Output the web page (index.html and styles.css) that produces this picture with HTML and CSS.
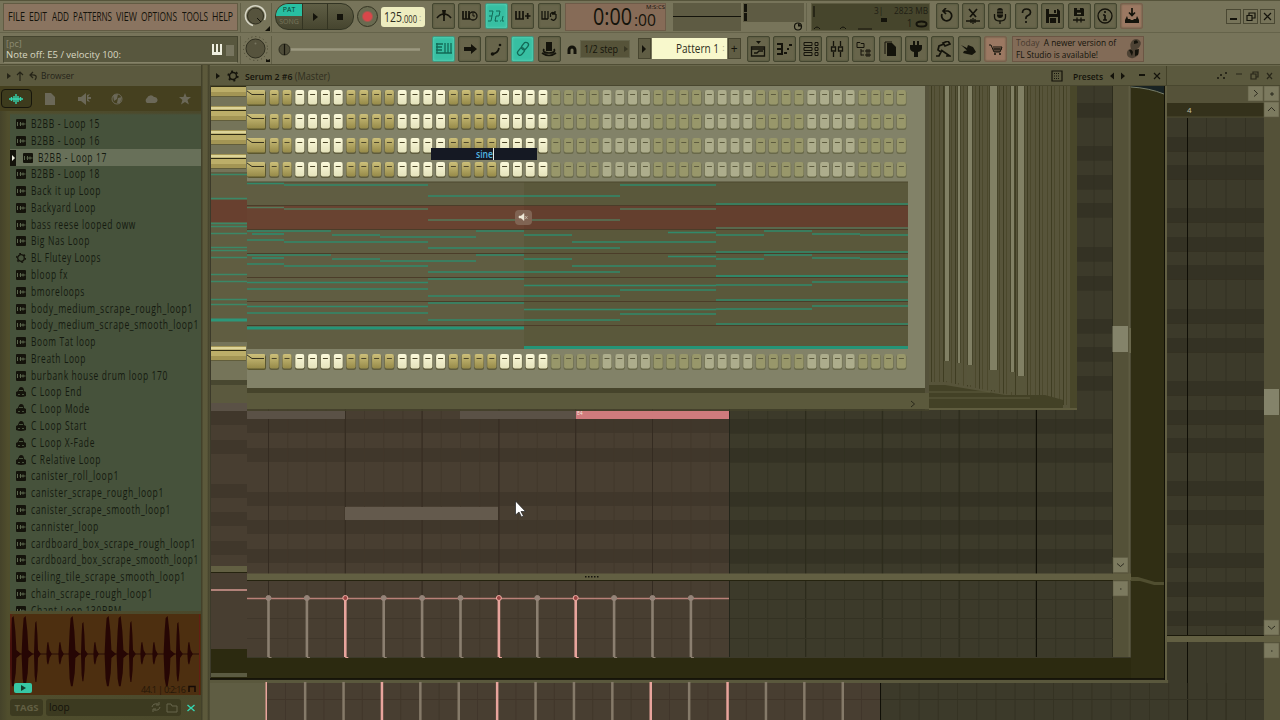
FILE: index.html
```html
<!DOCTYPE html>
<html lang="en">
<head>
<meta charset="utf-8">
<title>FL Studio</title>
<link rel="stylesheet" href="styles.css">
</head>
<body>
<header class="toolbar">
  <div class="bar bar-top">
    <nav class="menu">
      <span data-w="17">FILE</span><span data-w="18">EDIT</span><span data-w="17">ADD</span><span data-w="39">PATTERNS</span><span data-w="21">VIEW</span><span data-w="36">OPTIONS</span><span data-w="26">TOOLS</span><span data-w="21">HELP</span>
    </nav>
    <div class="knob-cell"><svg width="30" height="30"><circle cx="13.500" cy="13" r="8" class="knob"/><path d="M11 22.500A10 10 0 1 1 22.500 17" class="knob-ring"/><path d="M15 15l4 4" class="thin"/><path d="M28 23v5h-5z"/></svg></div>
    <div class="transport">
      <div class="patsong"><b>PAT</b><i>SONG</i></div>
      <div class="tbtn"><svg width="10" height="10"><path d="M3 1l5 4-5 4z"/></svg></div>
      <div class="tbtn tstop"><svg width="10" height="10"><path d="M1 2h6v6H1z"/></svg></div>
    </div>
    <div class="record"></div>
    <div class="tempo"><b data-w="18">125</b><small data-w="15">.000</small><i>:</i></div>
    <div class="buttons g1" data-icons="metro wait count* overdub looprec"></div>
    <div class="clock"><span data-w="39">0:00</span><div><i data-w="19">M:S:CS</i><small data-w="22">:00</small></div></div>
    <div class="scopes"><svg width="132" height="28"><rect width="68" height="28" class="sc"/><path d="M0 13.500h68" class="thin"/><rect x="70" width="61" height="19" class="sc"/><path d="M71 1h3v8h-3zM71 10h3v8h-3z"/><circle cx="125" cy="23.500" r="3.500" class="ln"/><path d="M125 20v3.500h4"/></svg></div>
    <div class="cpu"><svg width="76" height="27"><path d="M2 2v11" class="ln"/><path d="M2 25q3-4 6 0m20 0q3-4 6 0M46 25h14" class="thin"/><path d="M69 14h6v4h-6z"/></svg><div class="cpu-n"><span data-w="54">3|&nbsp;&nbsp;&nbsp;&nbsp;&nbsp;2823 MB</span><span class="one">1 <svg width="13" height="8"><ellipse cx="6.500" cy="4" rx="5" ry="2.500" class="thick"/></svg></span></div></div>
    <div class="buttons g2" data-icons="undo cut mic help save savenew info dl!"></div>
    <div class="winctl"><span><svg width="13" height="13"><path d="M3 9h7" class="thick"/></svg></span><span><svg width="13" height="13"><path d="M3 5.500h5v5H3zM5 5V3h6v5H8" class="ln"/></svg></span><span><svg width="13" height="13"><path d="M3 3l7 7M10 3l-7 7" class="ln"/></svg></span></div>
  </div>
  <div class="bar bar-low">
    <div class="hint"><div><i>[pc]</i><span data-w="115">Note off: E5 / velocity 100:</span></div><svg width="24" height="14"><path d="M1 1h2v8h2V1h2v8h2V1h2v11H1z" class="wh"/><rect x="15" y="2" width="8" height="11" class="ghost"/></svg></div>
    <div class="knob-cell"><svg width="30" height="28"><circle cx="13.500" cy="12.500" r="12" class="ticks"/><circle cx="13.500" cy="12.500" r="9.500" class="knob"/><circle cx="13.500" cy="7.500" r="1" class="ghost"/><path d="M24 23v3h4v-3l-2 1z"/></svg></div>
    <div class="slider"><svg width="146" height="20"><path d="M11 10.500h134" class="track"/><circle cx="9.500" cy="10.500" r="5.500" class="handle"/><path d="M9.500 5v11" class="ln"/></svg></div>
    <div class="buttons g3" data-icons="typing* arrow slide link* hat"></div>
    <svg class="magnet" width="12" height="14"><path d="M3 11V7a3 3 0 0 1 6 0v4" class="mag"/></svg>
    <div class="snap"><span data-w="34">1/2 step</span><svg width="6" height="10"><path d="M1 2l4 3-4 3z" class="dim"/></svg></div>
    <div class="pat"><span class="pb"><svg width="8" height="8"><path d="M2 0l4 4-4 4z"/></svg></span><span class="pn"><b data-w="43">Pattern 1</b><i>:</i></span><span class="pb">+</span></div>
    <div class="buttons g4" data-icons="playlist roll rack mixer browse doc plug tempo touch cart!"></div>
    <div class="news"><div><span data-w="100"><i>Today</i>&nbsp; A newer version of</span><span data-w="82">FL Studio is available!</span></div><svg width="18" height="22"><path d="M8 2q3-2 6 0 3 2 1 6-1 2-3 3 3 2 1 6-3 4-7 3-5-1-4-6 1-3 4-3-2-6 2-9z" fill="#4d4234"/><path d="M9 3q4-2 4 2l-4 1zM4 12q3-1 4 2l-1 4zM10 12l4-1-1 6-3 1z"/></svg></div>
  </div>
</header>
<main class="main">
  <aside class="browser">
    <div class="bhead"><svg width="34" height="12"><path d="M2 3l4 3-4 3z"/><path d="M15 11V2m-3 3l3-3 3 3" class="ln"/><path d="M30 10q4-6-5-5m3-3l-3 3 3 3" class="ln"/></svg><span data-w="33">Browser</span></div>
    <div class="tabs">
      <span class="on"><svg width="16" height="12"><path d="M1 6h14M3.500 4v4M6 3v6M8 1v10M10 3v6M12.500 4v4" class="aq"/></svg></span>
      <span><svg width="14" height="14"><path d="M2 1h6l4 4v8H2z"/></svg></span>
      <span><svg width="14" height="14"><path d="M1 5h3l5-4v12L4 9H1zM10 3l3-1-2 3h3v2h-3l2 3-3-1z"/></svg></span>
      <span><svg width="14" height="14"><circle cx="7" cy="7" r="5" fill="none" stroke="#6b6858"/><path d="M3 3l5-1-1 5-3 2zM8 6l4-1-2 6H7z"/></svg></span>
      <span><svg width="14" height="14"><path d="M3 11a3 3 0 0 1 0-5 4 4 0 0 1 7-1 3 3 0 0 1 1 6z"/></svg></span>
      <span><svg width="14" height="14"><path d="M7 1l1.600 4H13L9.500 8l1.400 4.600L7 10l-4 2.600L4.400 8 1 5h4.400z"/></svg></span>
    </div>
    <ul class="list" id="list"></ul>
    <div class="preview"><svg id="wave" width="190" height="81"></svg></div>
    <div class="search"><b>TAGS</b><div><span>loop</span><svg width="28" height="12"><path d="M2 6q1-4 6-3M9 1v3H6M10 6q-1 4-6 3M3 11V8h3M17 3h4l1 2h5v6H17z" class="gl"/></svg></div><svg width="10" height="10"><path d="M1.500 3l7 6M8.500 3l-7 6" class="aq"/></svg></div>
  </aside>
  <div class="split"></div>
  <section class="work">
    <div class="titles">
      <div class="ptitle"><svg width="30" height="14"><path d="M6 4l4 3-4 3z"/><circle cx="23" cy="7" r="3.500" class="ln2"/><circle cx="23" cy="7" r="4.800" class="teeth"/></svg><span data-w="85"><b>Serum 2 #6</b> <i>(Master)</i></span>
        <svg class="grid-i" width="12" height="12"><path d="M1 1h10v10H1z" class="ln"/><path d="M3 3.500h6M3 6h6M3 8.500h6" class="dots"/></svg><span data-w="30"><b>Presets</b></span><svg width="60" height="14"><path d="M6 3.500L2 7l4 3.500zM13 3.500L17 7l-4 3.500z"/><path d="M31 6h6" class="thick"/><path d="M46 4l6 6M52 4l-6 6" class="ln"/></svg></div>
      <div class="rtitle"><svg width="66" height="14"><path d="M5 9h2M8 6h2M11 9h2M13 4h2" class="thick"/><path d="M24 5h6M39 5h5v5h-5zM41 5V3h5v5h-2M55 4l5 6M60 4l-5 6" class="ln"/></svg></div>
    </div>
    <svg id="stage" width="1070" height="634" viewBox="210 86 1070 634"></svg>
  </section>
</main>
<script src="app.js"></script>
</body>
</html>
```
FILE: styles.css
```css
* { box-sizing: border-box; }
body { margin: 0; width: 1280px; height: 720px; overflow: hidden; background: #5b593e; color: #14130b; font-family: "Open Sans", "Noto Sans", sans-serif; }
svg { display: block; flex: none; fill: #14130b; }
i { font-style: normal; }
.fit { display: inline-block; flex: none; white-space: pre; }
.fit > span { display: inline-block; transform-origin: 0 50%; white-space: pre; }
.thin { fill: none; stroke: #14130b; stroke-width: 1; }
.ln { fill: none; stroke: #14130b; stroke-width: 1.2; }
.ln2 { fill: none; stroke: #14130b; stroke-width: 1.5; }
.thick { fill: none; stroke: #14130b; stroke-width: 2; }
.teeth { fill: none; stroke: #14130b; stroke-width: 1.6; stroke-dasharray: 2 3.02; }
.dots { fill: none; stroke: #14130b; stroke-dasharray: 1 1; }
.ic { fill: none; stroke: #14130b; stroke-width: 1.7; }
.ic1 { fill: none; stroke: #14130b; stroke-width: 1.3; }
.fl { fill: #14130b; stroke: none; }
.wh { fill: #efefe0; }
.ghost { fill: #77755f; }
.dim { fill: #393724; }
.aq { fill: none; stroke: #35d6b0; stroke-width: 1.4; }
.gl { fill: none; stroke: #66644b; }

.toolbar { height: 65px; background: #77745a; border-bottom: 1px solid #504e35; }
.bar { display: flex; align-items: flex-start; height: 33px; padding: 3px 5px 0 3px; border-bottom: 1px solid #65634a; }
.bar-top { border-top: 1px solid #56543b; padding-top: 2px; }
.bar-low { height: 31px; padding-top: 3px; border: 0; }
.menu { display: flex; align-items: center; gap: 4.300px; width: 235px; height: 28px; padding: 0 0 2px 4px; background: #8a7460; border: 1px solid #625b43; font-size: 13.500px; }
.knob-cell { width: 32px; height: 29px; margin-left: 2px; padding-left: 1px; border-left: 1px solid #605e45; border-right: 1px solid #605e45; }
.bar-low .knob-cell { height: 28px; }
.knob { fill: #56533d; stroke: #302f20; }
.knob-ring { fill: none; stroke: #d5d4c4; stroke-width: 1.5; }
.ticks { fill: none; stroke: #45432e; stroke-dasharray: 1 3; }
.transport { display: flex; width: 79px; height: 27px; margin-left: 3px; border: 1px solid #323423; border-radius: 13px; overflow: hidden; background: linear-gradient(#5f5e45, #46452f); }
.patsong { display: flex; flex-direction: column; width: 27px; font-size: 7px; line-height: 11px; text-align: center; border-right: 1px solid #343422; color: #77745a; }
.patsong b { height: 12px; background: #28bfa1; color: #083d31; font-weight: 400; }
.tbtn { display: flex; align-items: center; justify-content: center; width: 25px; border-right: 1px solid #343422; }
.tstop { border: 0; }
.record { width: 21px; height: 21px; margin: 3px 0 0 3px; border-radius: 50%; border: 1px solid #343422; background: radial-gradient(#d9474a 0 4px, #696a50 6px); }
.tempo { display: flex; align-items: center; width: 44px; height: 20px; margin: 4px 0 0 3px; padding-left: 3px; background: #eeedc0; border-radius: 3px; color: #2e2d1f; }
.tempo b { font-weight: 400; font-size: 15px; line-height: 18px; padding-bottom: 2px; }
.tempo small { font-size: 11px; line-height: 14px; padding-top: 3px; }
.tempo i { margin-left: 2px; font-size: 9px; color: #aaa985; }
.buttons { display: flex; gap: 3.400px; flex: none; }
.btn { display: flex; align-items: center; justify-content: center; width: 23px; height: 26px; background: #68654b; border: 1px solid #444630; box-shadow: inset 0 0 2px #4b5236; border-radius: 2px; }
.btn.lit { background: #37bfa2; border-color: #43947b; box-shadow: inset 0 0 3px #68d9bd; }
.btn.lit svg * { stroke: #126956; }
.btn.lit svg .fl { fill: #126956; stroke: none; }
.btn.warm { background: #9b7862; border-color: #77604c; }
.g1 { margin-left: 7px; }
.clock { display: flex; width: 101px; height: 28px; margin-left: 4px; padding-left: 27px; background: #866b57; border: 1px solid #6e5b48; font-size: 23px; line-height: 25px; }
.clock div { display: flex; flex-direction: column; margin-left: 2px; }
.clock small { font-size: 17px; line-height: 19px; }
.clock i { font-size: 6px; line-height: 6px; margin-left: 12px; }
.scopes { width: 134px; margin-left: 7px; border-right: 1px solid #65634a; }
.sc { fill: #5e5b43; }
.cpu { display: flex; width: 119px; height: 28px; margin-left: 4px; background: #46452c; border: 1px solid #5c5a40; }
.cpu-n { display: flex; flex-direction: column; align-items: flex-end; width: 54px; margin-left: -14px; font-size: 9px; line-height: 13px; color: #1f1e14; }
.one { display: flex; align-items: center; gap: 2px; font-size: 10px; }
.g2 { margin-left: 6px; }
.winctl { display: flex; gap: 2px; margin: 6px 0 0 auto; }
.winctl span { width: 15px; height: 15px; border: 1px solid #4a4833; }
.hint { display: flex; justify-content: space-between; align-items: center; width: 235px; height: 27px; padding: 0 2px; background: #58573e; border: 1px solid #45452f; border-bottom-color: #858268; }
.hint div { display: flex; flex-direction: column; font-size: 9.500px; line-height: 12px; color: #d9d8c2; }
.hint div > i { color: #8d8b72; font-size: 9px; line-height: 11px; }
.slider { width: 154px; padding: 3px 0 0 3px; }
.track { stroke: #9b9880; stroke-width: 2.5; }
.handle { fill: #4e4c38; stroke: #2f2e20; }
.g3 { margin-left: 6px; }
.magnet { margin: 7px 0 0 5px; }
.mag { fill: none; stroke: #14130b; stroke-width: 3; }
.snap { display: flex; align-items: center; gap: 5px; width: 50px; height: 18px; margin: 4px 0 0 2px; padding-left: 3px; background: #565339; border: 1px solid #64634a; font-size: 10.500px; line-height: 15px; }
.pat { display: flex; gap: 1px; margin: 2px 0 0 8px; }
.pb { display: flex; align-items: center; justify-content: center; width: 13px; height: 21px; background: #605d44; border: 1px solid #484630; font-size: 12px; }
.pn { display: flex; align-items: center; justify-content: flex-end; gap: 3px; width: 75px; height: 21px; padding: 0 2px 2px 0; background: #f8f8cc; font-size: 13.500px; color: #302f20; }
.pn b { font-weight: 400; }
.pn i { font-size: 9px; color: #aaa985; }
.g4 { margin-left: 6px; }
.news { display: flex; justify-content: space-between; align-items: center; width: 132px; height: 26px; margin-left: 5px; padding-left: 3px; background: #826b57; border: 1px solid #6b5644; }
.news div { display: flex; flex-direction: column; font-size: 9.500px; line-height: 12px; }
.news i { color: #473a2e; }

.main { display: flex; height: 655px; }
.browser { width: 201px; height: 655px; background: linear-gradient(90deg, #45432a, #504e2d 8px, #4a482b); }
.bhead { display: flex; align-items: center; gap: 2px; height: 21px; padding: 0 0 1px 5px; background: #5b593e; border-top: 1px solid #69674c; font-size: 9.500px; color: #24231a; }
.bhead svg { opacity: .75; }
.tabs { display: flex; align-items: center; height: 25px; padding-left: 1px; gap: 3px; background: #45401f; }
.tabs span { display: flex; align-items: center; justify-content: center; width: 30.700px; height: 19px; }
.tabs svg { fill: #6b6858; }
.tabs .on { border: 1px solid #17160c; border-radius: 4px; background: #3d3b1d; }
.list { height: 500px; margin: 0 0 0 10px; padding: 4.600px 0 0; list-style: none; overflow: hidden; background: linear-gradient(#46402a00 0 2px, #46523b 4px); }
.list li { display: flex; align-items: center; gap: 5px; height: 16.790px; padding-left: 6px; font-size: 12px; line-height: 16px; letter-spacing: .9px; color: #151a10; }
.list li.sel { padding-left: 0; gap: 5px; background: #687059; }
.list li.sel svg:first-child { margin-right: 1px; }
.preview { width: 191px; height: 81px; margin: 3px 0 0 10px; background: #4d2f10; }
.search { display: flex; align-items: center; gap: 3px; height: 24px; padding-left: 10px; font-size: 9.500px; }
.search b { width: 33px; height: 17px; text-align: center; line-height: 17px; background: #3c3a20; color: #625f43; border-radius: 3px; }
.search div { display: flex; align-items: center; justify-content: space-between; width: 135px; height: 17px; padding: 0 3px; background: #3c3a20; border-radius: 3px; font-size: 10px; }
.search > svg { margin-left: 2px; }
.split { width: 9px; background: linear-gradient(90deg, #43412a 1px, #5c593b 2px 6px, #413f29 8px, #5a583d); }
.work { width: 1070px; }
.titles { display: flex; height: 21px; border-top: 1px solid #69674c; border-bottom: 1px solid #49472f; }
.ptitle, .rtitle { display: flex; align-items: center; font-size: 10px; }
.ptitle { width: 957px; gap: 5px; border-right: 1px solid #444229; }
.ptitle b { font-weight: 600; font-size: 9.500px; }
.ptitle i { color: #302f20; }
.grid-i { margin-left: 716px; margin-right: 5px; }
.rtitle { width: 113px; padding-left: 45px; opacity: .7; }
text.lab { font-size: 8px; }
```
FILE: app.js
```javascript
// Squeeze labels to the condensed widths of the interface.
function fit(el) {
  const w = parseFloat(el.dataset.w);
  const inner = document.createElement('span');
  while (el.firstChild) inner.appendChild(el.firstChild);
  el.appendChild(inner);
  el.classList.add('fit');
  el.style.width = w + 'px';
  inner.style.transform = 'scaleX(' + (w / inner.getBoundingClientRect().width) + ')';
}

const icons = {
  metro: '<path d="M1 10q3-4 7-4t7 4M8 6v7" class="ic"/><path d="M6 2h4l-1 6H7z" class="fl"/>',
  wait: '<path d="M1 3v8h7M4 3v8M7 3v8" class="ic"/><circle cx="11" cy="8" r="4" class="ic1"/><path d="M11 5v3h2" class="thin"/>',
  count: '<path d="M1 3h4l-1 5H1M4 8l-1 5H0M7 13h1M8 3h4l-1 5H8l-1 5h3M12 13h1M15 8l-1 5h2" class="thin"/>',
  overdub: '<path d="M1 3v8h8M4.500 3v8M8 3v8M10 8h5.500M12.700 5v6" class="ic"/>',
  looprec: '<path d="M1 3v8h6M4 3v8M7 3v8M9.500 9V6q2-3 5 0M15 6v4q-2 4-5 1M14 3v3h-3" class="ic1"/>',
  undo: '<path d="M4 3h5a5 5 0 1 1-6 3M7 0L4 3l3 3" class="ic"/>',
  cut: '<path d="M4 1l7 8M12 1L5 9" class="ic"/><path d="M1 13h14M6 11v4M8 10v6M10 11v4" class="ic1"/>',
  mic: '<rect x="5" y="0" width="6" height="10" rx="3" class="fl"/><path d="M2.500 6v3q0 4 5.500 4t5.500-4V6M8 13v3" class="ic1"/><path d="M5 3h6M5 6h6" stroke="#68654b" stroke-width=".8"/>',
  help: '<path d="M4.500 5q0-4 4-4t4 3.500q0 2-2.500 3T8 11M8 13v2" class="ic"/>',
  save: '<path d="M1 1h12l2 2v12H1z" class="fl"/><path d="M4 1h8v5H4zM4 9h9v6H4z" fill="#68654b"/><path d="M9 2h2v3H9zM5 10h6v5H5z" class="fl"/>',
  savenew: '<path d="M3 0h9l1 1v7H3z" class="fl"/><path d="M6 1h3M6 5.500h4" stroke="#77745a" stroke-width="1.500"/><path d="M2 12h12M6 9.500v5M10 9.500v5" class="ic1"/>',
  info: '<circle cx="8" cy="8" r="7" class="ic1"/><path d="M8 7v5M6 7h2M6 12h4M8 3v2" class="ic"/>',
  dl: '<path d="M8 0v7M5 4.500l3 3 3-3" class="ic"/><path d="M3 8L1 12v3h14v-3l-2-4-1 3h-2l-1 1H7l-1-1H4z" class="fl"/>',
  typing: '<path d="M0 3h7M0 6h6M0 9h6M0 12h16M9 2v10M12 2v10M15 2v10M1 2v10" class="ic1"/>',
  arrow: '<path d="M2 6h7V3l6 5-6 5v-3H2z" class="fl"/>',
  slide: '<path d="M3 13q7 0 8-6" class="ic"/><circle cx="4.500" cy="13" r="1.800"/><circle cx="12" cy="4" r="1.300"/>',
  link: '<rect x="7.500" y="1" width="5" height="8" rx="2.500" transform="rotate(38 10 5)" class="ic1"/><rect x="3.500" y="6.500" width="5" height="8" rx="2.500" transform="rotate(38 6 10.500)" class="ic1"/>',
  hat: '<path d="M5 1h6v9H5z" class="fl"/><path d="M3 8q-2 4 5 4t5-4M1 12q7 5 14 0" class="ic"/>',
  playlist: '<path d="M1.500 6h13v9h-13zM4 12h3l2-2h4M2 8h13" class="ic1"/><path d="M6 0h5L8.500 3z" class="fl"/>',
  roll: '<path d="M1 3h5v10H1M1 8h5M8 12h3M11 8h2M13 4h3" class="thick"/>',
  rack: '<path d="M1 1.500h8v3H1zM1 6.500h8v3H1zM1 11.500h8v3H1zM12 1.500h3v3h-3zM12 6.500h3v3h-3zM12 11.500h3v3h-3z" class="thin"/>',
  mixer: '<path d="M4.500 0v5M11.500 0v5M4.500 11v5M11.500 11v5M2.500 6h4v4h-4zM9.500 6h4v4h-4z" class="ic1"/>',
  browse: '<path d="M1 1.500h3l1 1h3v4H1zM5 8v6.500M5 10h3M5 14h3M9 10h6M9 14h6M11 8v4M13 8v4M11 12v4M13 12v4" class="thin"/>',
  doc: '<path d="M5 2h5l4 4v9H5z" class="fl"/><path d="M3 13V1h7" class="thin"/>',
  plug: '<path d="M5 0h2v4h2V0h2v4h3v3q0 3-4 4v5H6v-5Q2 10 2 7V4h3z" class="fl"/>',
  tempo: '<path d="M8 2l5-2 2 3-5 2zM9 3L4 5l-1 4 3 2-2 4H1M6 9l9 6h-4" class="ic"/>',
  touch: '<path d="M0 4l6 3 1-3 5 2 3 5-4 3-5-1-4-1 1-2 3-.500z" class="fl"/>',
  cart: '<path d="M1 4h2l3 7h6l2-5H5M7 7v4M9 7v4M11 7v4M5 8h9" class="thin"/><circle cx="7" cy="13" r="1"/><circle cx="12" cy="13" r="1"/>'
};
document.querySelectorAll('[data-icons]').forEach(g => {
  g.innerHTML = g.dataset.icons.split(' ').map(n => {
    const c = n.endsWith('*') ? ' lit' : n.endsWith('!') ? ' warm' : '';
    return `<span class="btn${c}"><svg width="16" height="16">${icons[n.replace(/[*!]/, '')]}</svg></span>`;
  }).join('');
});

// Sample browser entries: [name, width, kind]
const items = [['B2BB - Loop 15',69],['B2BB - Loop 16',69],['B2BB - Loop 17',69,'sel'],['B2BB - Loop 18',69],['Back it up Loop',70],['Backyard Loop',65],['bass reese looped oww',105],['Big Nas Loop',59],['BL Flutey Loops',70,'gear'],['bloop fx',37],['bmoreloops',54],['body_medium_scrape_rough_loop1',162],['body_medium_scrape_smooth_loop1',168],['Boom Tat loop',65],['Breath Loop',55],['burbank house drum loop 170',137],['C Loop End',51,'pre'],['C Loop Mode',59,'pre'],['C Loop Start',56,'pre'],['C Loop X-Fade',64,'pre'],['C Relative Loop',70,'pre'],['canister_roll_loop1',88],['canister_scrape_rough_loop1',133],['canister_scrape_smooth_loop1',140],['cannister_loop',68],['cardboard_box_scrape_rough_loop1',165],['cardboard_box_scrape_smooth_loop1',168],['ceiling_tile_scrape_smooth_loop1',155],['chain_scrape_rough_loop1',122],['Chant Loop 130BPM',91]];
const kinds = {
  gear: '<circle cx="5" cy="5" r="3.300" fill="none" stroke="#14130b" stroke-width="1.300"/><circle cx="5" cy="5" r="4.500" fill="none" stroke="#14130b" stroke-width="1.200" stroke-dasharray="1.800 2.910"/>',
  pre: '<path d="M2 4q1-4 3-4 3 0 3 4l2 1v4q-5 2-10 0V5z"/><path d="M3 3.500h4M2 7.500h2M6 7.500h2" stroke="#46523b"/>',
  wav: '<rect width="10" height="10" rx="1"/><path d="M1.500 3v4M3.500 5h6M4.500 3v4M7 3.500v3" stroke="#5b664d"/>'
};
document.getElementById('list').innerHTML = items.map(([n, w, k]) =>
  `<li class="${k === 'sel' ? 'sel' : ''}">` + (k === 'sel' ? '<svg width="7" height="16"><path d="M0 0h6v16H0z"/><path d="M2 5l3 3-3 3z" class="wh"/></svg>' : '') +
  `<svg width="10" height="10">${kinds[k] || kinds.wav}</svg><span data-w="${w}">${n}</span></li>`).join('');
document.querySelectorAll('[data-w]').forEach(fit);

// Waveform: [x, half height]
const hits = [[3,38],[15,38],[26,33],[38,12],[50,12],[62,38],[73,32],[85,12],[98,38],[110,38],[121,33],[132,12],[144,12],[157,38],[168,32],[179,12]];
document.getElementById('wave').innerHTML = '<path d="M0 40H190" stroke="#290d06"/><g fill="#260604">' +
  hits.map(([x, h]) => { const b = h > 34 ? 3.4 : h > 20 ? 2 : 1.6; return `<path d="M${x-b} 40L${x-b*.7} ${40-h*.6}L${x-b*.4} ${40-h*.95}L${x+b*.2} ${40-h}L${x+b*.7} ${40-h*.6}L${x+b} 36l${b*1.4} 4l${-b*1.4} 4L${x+b*.8} ${40+h*.5}L${x+b*.2} ${40+h*.85}h${-b*.5}L${x-b*.7} ${40+h*.65}z"/>`; }).join('') +
  '</g><path d="M1 0V81M189.500 0V81" stroke="#651d14"/><rect x="4" y="69" width="18" height="10" rx="2" fill="#37c7a4"/><path d="M11 71l5 3-5 3z" fill="#123c2e"/><text x="131" y="79" font-size="9" textLength="45" fill="#251708">44.1 | 0:2:16</text><path d="M179 78v-5.500h6v5.500" fill="none" stroke="#140a05" stroke-width="1.500"/>';

// Editor stage
let s = '';
const R = (x, y, w, h, f, e = '') => { s += `<rect x="${x}" y="${y}" width="${w}" height="${h}" fill="${f}" ${e}/>`; };
const L = (x1, y1, x2, y2, c, w = 1) => { s += `<path d="M${x1} ${y1}L${x2} ${y2}" stroke="${c}" stroke-width="${w}" fill="none"/>`; };

R(210, 86, 1070, 634, '#3c3a2a');
// roll rows
[103,146,175,203,247,276,319,347,376,419,448,492,520,549].forEach(y => {
  R(729, y, 384, 14, '#343224');
  L(729, y + 14.5, 1113, y + 14.5, '#323022', .6);
});
for (let x = 748; x < 1113; x += 19.2) L(x + .5, 86, x + .5, 657, '#313021', .7);
for (let x = 805.5; x < 1113; x += 76.8) L(x, 86, x, 657, '#2c2b1c');
[599, 618, 638].forEach(y => L(729, y + .5, 1113, y + .5, '#343223'));
L(1036.5, 86, 1036.5, 657, '#0f0e06');
R(247, 409, 482, 248, '#483e31');
[419,448,492,520,549].forEach(y => R(247, y, 482, 14, '#40372b'));
for (let x = 268.5; x < 729; x += 19.2) L(x, 409, x, 657, '#41372b', .8);
for (let x = 268.5; x < 729; x += 76.8) L(x, 409, x, 657, '#342b21');
[618, 638].forEach(y => L(247, y + .5, 729, y + .5, '#40372b'));
L(729.5, 409, 729.5, 657, '#23251a');
R(247, 411, 98, 8, '#5a5146'); R(460, 411, 116, 8, '#5a5146');
R(576, 411, 153, 8, '#cf7b7d');
s += '<text x="577" y="415" font-size="5" fill="#f4e5dc">E4</text>';
R(345, 507, 153, 13, '#645a4d');
// velocity lane
L(247, 598.5, 729, 598.5, '#b98178', 1.5);
for (let i = 0; i < 12; i++) {
  const x = 268.5 + i * 38.4, p = [2, 6, 8].includes(i);
  R(x - 1.3, 600, 2.6, 57, p ? '#e8a49c' : '#8b7f70');
  R(x, 657, 3, 1.5, p ? '#e8a49c' : '#8b7f70');
  s += `<circle cx="${x}" cy="598" r="2.500" fill="${p ? '#9c4644' : '#958479'}" stroke="${p ? '#efafa6' : '#958479'}"/>`;
}
R(247, 573.5, 866, 6.5, '#625f42'); L(247, 580.5, 1113, 580.5, '#25230f');
for (let x = 585; x < 600; x += 3) R(x, 576, 1.5, 1.5, '#14130b');
R(211, 658, 954, 21, '#2c2a10');
// left strip
R(211, 86, 36, 593, '#483e31');
[411,440,484,512,541].forEach(y => R(211, y, 36, 14, '#40372b'));
R(211, 649, 36, 30, '#2c2a10'); R(211, 673, 36, 4, '#5b5b42');
R(211, 566, 36, 6, '#625f42'); L(211, 572.5, 247, 572.5, '#25230f');
L(211, 590, 247, 590, '#d69a92', 1.6);
R(211, 86, 36, 294, '#757459');
R(211, 380, 36, 5, '#484730'); R(211, 385, 36, 18, '#5b593e'); R(211, 403, 36, 8, '#5a5146');
[82, 106, 130, 154, 346].forEach(y => {
  R(211, y, 35, 14.5, '#a39554'); R(211, y + 1, 35, 2.5, '#ddd498'); L(211, y + 4.5, 246, y + 4.5, '#302c13');
  R(211, y + 5, 35, 5, '#bcae69'); L(211, y + 14.5, 246, y + 14.5, '#615d3b');
});
R(211, 172, 36, 170, '#605d41'); R(211, 200, 36, 22, '#68402f');
[175,199,224,227,234,248,251,258,275,282,300,305].forEach(y => L(211, y - .5, 247, y - .5, '#3b8867', 1.5));
L(211, 320, 247, 320, '#2c977a', 3);

// trailing window edges
R(929, 86, 148, 324, '#57543a');
for (let x = 931, i = 0; x < 1070; x += 3 + (i * 5 % 3), i++) {
  const b = x < 945 ? 382 : Math.min(405, 382 + (x - 945) * .2);
  L(x + .5, 86, x + .5, b, i % 3 ? '#4b482c' : '#3f3d22');
}
R(1070, 86, 7, 322, '#49472a');
[[945,4,361],[958,2,363],[968,4,365],[990,7,370],[1011,3,372],[1018,6,376]].forEach(([x, w, y]) => {
  R(x, 86, w, y - 86, '#818064'); L(x - .5, 86, x - .5, y, '#46442a'); L(x + w + .5, 86, x + w + .5, y, '#46442a'); R(x - 1, y, w + 2, 20, '#57553a');
});
s += '<path d="M929 385h16l60 10h40l18 5v8H929z" fill="#434126"/>';
L(929, 398, 1030, 398, '#5f5c3e'); L(929, 392, 990, 392, '#5f5c3e'); L(929, 409, 1077, 409, '#5f5c3e', 2);

// channel rack
R(247, 86, 678, 302, '#828268');
R(925, 86, 4, 324, '#54513a');
R(247, 388, 678, 6, '#46442b'); R(247, 393, 682, 16, '#5b593c'); L(247, 410, 929, 410, '#45432b', 1.5);
s += '<path d="M911 401l3.500 3-3.500 3" class="thin" stroke-opacity=".7"/>';
s += '<defs><linearGradient id="tan" x2="0" y2="1"><stop stop-color="#cdc07a"/><stop offset="1" stop-color="#968a49"/></linearGradient><linearGradient id="wht" x2="0" y2="1"><stop stop-color="#fcfadb"/><stop offset="1" stop-color="#e4e2bb"/></linearGradient></defs>';
[90, 114, 138, 162, 354].forEach(y => {
  R(247, y + 1, 19, 15, '#5b572f', 'rx="2"'); R(247, y, 18, 14.5, 'url(#tan)', 'rx="1"');
  s += `<path d="M247 ${y + 1}l5 3.500h12" class="thin" stroke-opacity=".8"/>`;
  for (let i = 0; i < 50; i++) {
    const x = 269.7 + i * 12.8, t = Math.floor((i + 2) / 4) % 2 === 0, d = i > 21;
    R(x - .5, y + .5, 10, 15.5, d ? '#69694a' : '#5f5c3d', 'rx="2.500"');
    R(x, y, 9, 14.5, d ? (t ? '#98976a' : '#adad8c') : t ? 'url(#tan)' : 'url(#wht)', 'rx="2"');
    R(x + 2, y + 4, 5, 1, d ? '#5d5b3e' : '#4d472a');
  }
});
// clip lanes
R(247, 182, 661, 167, '#5a583b'); R(247, 182, 277, 167, '#605d42'); L(247, 182, 908, 182, '#4c492f');
R(247, 206, 661, 23, '#643f2e'); R(247, 206, 277, 23, '#694331');
[205,229,253,277,301,325].forEach(y => L(247, y + .5, 908, y + .5, '#4b3d29'));
const N = (a, b, y, w = 1.7) => L(a, y, b, y, y > 206 && y < 229 ? '#55795a' : '#318a6b', w);
[0, 24].forEach(d => { N(247,284,183.5+d); N(284,428,185+d); N(428,620,196+d); N(620,716,185+d); N(716,908,204+d); });
[0, 24].forEach(d => {
  [[247,331,231],[252,284,234],[332,380,235],[380,476,237],[476,524,231],[524,572,235],[572,716,242],[668,716,232.5],[716,764,235],[764,812,231],[812,860,234],[860,908,235],[247,284,240],[284,428,242],[428,620,248],[716,908,252]].forEach(([a, b, y]) => N(a, b, y + d));
});
[0, 24].forEach(d => { [[247,428,282.5],[247,428,289],[428,524,279],[428,620,296],[524,716,285.5],[620,716,290],[716,812,285],[812,908,282],[716,908,300]].forEach(([a, b, y]) => N(a, b, y + d)); });
N(716, 908, 276);
L(247, 328, 524, 328, '#259477', 3); L(524, 347.5, 908, 347.5, '#259477', 3);
R(431, 148, 106, 12, '#151923');
s += '<text x="476" y="158" font-size="10" font-weight="600" font-family="Open Sans" fill="#52b7e3" textLength="17" lengthAdjust="spacingAndGlyphs">sine</text>';
L(493.5, 148, 493.5, 160, '#e6e9e6');
R(515, 210, 17, 15, '#806453', 'rx="4"');
s += '<path d="M519 216h2l3-2.500v7l-3-2.500h-2zM525 216l2.500 3M527.500 216l-2.500 3" fill="#eee9d8" stroke="#eee9d8" stroke-width=".5"/>';

// roll scrollbar and edge
const B = (x, y, g) => { R(x, y, 15, 15, '#7c7a5f', 'stroke="#5f5d44" stroke-width=".6"'); s += `<path d="${g}" transform="translate(${x} ${y})" class="thin" stroke-opacity=".75"/>`; };
R(1113, 86, 16, 571, '#545138'); L(1129.5, 86, 1129.5, 657, '#5f5c42', 2);
R(1131, 86, 33, 593, '#302e14');
s += '<path d="M1131 86H1164V94Q1150 88 1131 87z" fill="#192323"/><path d="M1131 87Q1149 88 1164 94" fill="none" stroke="#777d69"/>';
s += '<path d="M1130 577l8 0 17 5h9v3h-10l-14-4h-10z" fill="#504e30"/>';
R(1113, 573.5, 18, 6.5, '#625f42');
R(1112.5, 326, 15.5, 26, '#84836a'); R(1129, 328, 2, 25, '#69674c');
B(1113, 557.5, 'M4 6l3.500 3 3.500-3'); B(1113, 581, 'M7 8h1.500');
L(1164.5, 86, 1164.5, 680, '#111006'); R(1165, 86, 2.5, 594, '#625f43');

// playlist panel on the right
R(1167, 86, 113, 594, '#3c3a2a');
[137,165,208,237,265,309,338,381,410,438,481,510,553,582,611].forEach(y => { R(1167, y, 97, 14, '#343224'); L(1167, y + 14.5, 1264, y + 14.5, '#302e20', .7); });
[1206.5, 1226, 1245.5].forEach(x => L(x, 118, x, 720, '#333122'));
R(1167, 86, 113, 17, '#555239'); R(1167, 103, 97, 14, '#34311b'); L(1167, 117, 1264, 117, '#4f4c32');
L(1187.5, 118, 1187.5, 720, '#0f0e06');
s += '<text x="1187" y="113" class="lab" fill="#c4c2a8">4</text>';
R(1264, 103, 16, 617, '#545138');
R(1167, 636, 113, 6, '#625f42'); L(1167, 635.5, 1264, 635.5, '#1b190b');
B(1248, 86, 'M6 4l3.500 3.500-3.500 3'); B(1264, 86, 'M7 7h2v2h-2z'); B(1264, 102, 'M4 9l3.500-3.500 3.500 3.500');
R(1264, 389, 15, 26, '#84836a'); B(1264, 620, 'M4 6l3.500 3 3.500-3'); B(1264, 643, 'M7 8h1.500');

// bottom lane
L(210, 679, 1165, 679, '#0f0e06', 1.3); R(208, 680, 960, 3, '#5a583d');
R(208, 683, 58, 37, '#5f5d43'); R(266, 683, 614, 37, '#483e31'); R(880, 683, 287, 37, '#3c3a2a');
for (let x = 285; x < 1264; x += 19.2) L(x + .5, 683, x + .5, 720, x < 880 ? '#403529' : '#333122', .8);
L(266, 699.5, 880, 699.5, '#403529'); L(880, 699.5, 1264, 699.5, '#333122'); L(880.5, 683, 880.5, 720, '#0f0e06');
for (let i = 0; i < 16; i++) {
  const p = [0, 3, 6, 10, 12].includes(i);
  R(265.5 + i * 38.4, 682, i ? 2.5 : 1.5, 38, p ? '#e8a49c' : '#857a69');
}
// pointer
s += '<path d="M515.500 501v14l3.500-3 2.500 5 2-1-2.500-4.500h4.500z" fill="#fff" stroke="#222" stroke-width=".7"/>';
document.getElementById('stage').innerHTML = s;
```
